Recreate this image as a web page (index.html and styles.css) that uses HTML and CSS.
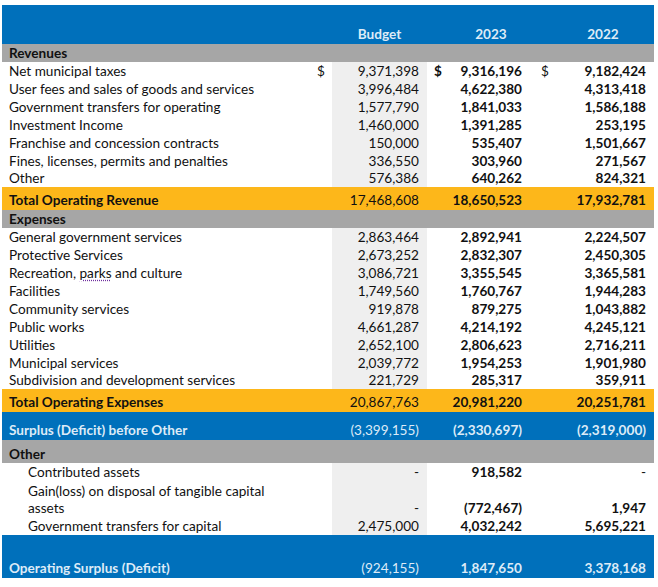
FILE: index.html
```html
<!DOCTYPE html>
<html>
<head>
<meta charset="utf-8">
<link rel="stylesheet" href="styles.css">
</head>
<body>
<table class="fin">
  <colgroup>
    <col class="c-label"><col class="c-dol1"><col class="c-bud"><col class="c-dol2"><col class="c-y23"><col class="c-dol3"><col class="c-y22">
  </colgroup>
  <tr class="head">
    <td></td><td></td><td class="hc">Budget</td><td></td><td class="hc">2023</td><td></td><td class="hc">2022</td>
  </tr>
  <tr class="sec"><td>Revenues</td><td></td><td></td><td></td><td></td><td></td><td></td></tr>
  <tr class="row"><td class="lbl">Net municipal taxes</td><td class="dol">$</td><td class="num bud">9,371,398</td><td class="dol b">$</td><td class="num b">9,316,196</td><td class="dol d3">$</td><td class="num b">9,182,424</td></tr>
  <tr class="row"><td class="lbl">User fees and sales of goods and services</td><td></td><td class="num bud">3,996,484</td><td></td><td class="num b">4,622,380</td><td></td><td class="num b">4,313,418</td></tr>
  <tr class="row"><td class="lbl">Government transfers for operating</td><td></td><td class="num bud">1,577,790</td><td></td><td class="num b">1,841,033</td><td></td><td class="num b">1,586,188</td></tr>
  <tr class="row"><td class="lbl">Investment Income</td><td></td><td class="num bud">1,460,000</td><td></td><td class="num b">1,391,285</td><td></td><td class="num b">253,195</td></tr>
  <tr class="row"><td class="lbl">Franchise and concession contracts</td><td></td><td class="num bud">150,000</td><td></td><td class="num b">535,407</td><td></td><td class="num b">1,501,667</td></tr>
  <tr class="row"><td class="lbl">Fines, licenses, permits and penalties</td><td></td><td class="num bud">336,550</td><td></td><td class="num b">303,960</td><td></td><td class="num b">271,567</td></tr>
  <tr class="row r17"><td class="lbl">Other</td><td></td><td class="num bud">576,386</td><td></td><td class="num b">640,262</td><td></td><td class="num b">824,321</td></tr>
  <tr class="tot"><td class="lbl">Total Operating Revenue</td><td></td><td class="num">17,468,608</td><td></td><td class="num b">18,650,523</td><td></td><td class="num b">17,932,781</td></tr>
  <tr class="sec"><td>Expenses</td><td></td><td></td><td></td><td></td><td></td><td></td></tr>
  <tr class="row"><td class="lbl">General government services</td><td></td><td class="num bud">2,863,464</td><td></td><td class="num b">2,892,941</td><td></td><td class="num b">2,224,507</td></tr>
  <tr class="row"><td class="lbl">Protective Services</td><td></td><td class="num bud">2,673,252</td><td></td><td class="num b">2,832,307</td><td></td><td class="num b">2,450,305</td></tr>
  <tr class="row"><td class="lbl">Recreation, <span class="spell">parks</span> and culture</td><td></td><td class="num bud">3,086,721</td><td></td><td class="num b">3,355,545</td><td></td><td class="num b">3,365,581</td></tr>
  <tr class="row"><td class="lbl">Facilities</td><td></td><td class="num bud">1,749,560</td><td></td><td class="num b">1,760,767</td><td></td><td class="num b">1,944,283</td></tr>
  <tr class="row"><td class="lbl">Community services</td><td></td><td class="num bud">919,878</td><td></td><td class="num b">879,275</td><td></td><td class="num b">1,043,882</td></tr>
  <tr class="row"><td class="lbl">Public works</td><td></td><td class="num bud">4,661,287</td><td></td><td class="num b">4,214,192</td><td></td><td class="num b">4,245,121</td></tr>
  <tr class="row"><td class="lbl">Utilities</td><td></td><td class="num bud">2,652,100</td><td></td><td class="num b">2,806,623</td><td></td><td class="num b">2,716,211</td></tr>
  <tr class="row"><td class="lbl">Municipal services</td><td></td><td class="num bud">2,039,772</td><td></td><td class="num b">1,954,253</td><td></td><td class="num b">1,901,980</td></tr>
  <tr class="row r17"><td class="lbl">Subdivision and development services</td><td></td><td class="num bud">221,729</td><td></td><td class="num b">285,317</td><td></td><td class="num b">359,911</td></tr>
  <tr class="tot"><td class="lbl">Total Operating Expenses</td><td></td><td class="num">20,867,763</td><td></td><td class="num b">20,981,220</td><td></td><td class="num b">20,251,781</td></tr>
  <tr class="blue b28"><td class="lbl b">Surplus (Deficit) before Other</td><td></td><td class="num">(3,399,155)</td><td></td><td class="num b">(2,330,697)</td><td></td><td class="num b">(2,319,000)</td></tr>
  <tr class="sec s23"><td>Other</td><td></td><td></td><td></td><td></td><td></td><td></td></tr>
  <tr class="row"><td class="lbl ind">Contributed assets</td><td></td><td class="num bud">-</td><td></td><td class="num b">918,582</td><td></td><td class="num">-</td></tr>
  <tr class="row r36"><td class="lbl ind">Gain(loss) on disposal of tangible capital<br>assets</td><td></td><td class="num bud">-</td><td></td><td class="num b">(772,467)</td><td></td><td class="num b">1,947</td></tr>
  <tr class="row"><td class="lbl ind">Government transfers for capital</td><td></td><td class="num bud">2,475,000</td><td></td><td class="num b">4,032,242</td><td></td><td class="num b">5,695,221</td></tr>
  <tr class="blue b43"><td class="lbl b">Operating Surplus (Deficit)</td><td></td><td class="num">(924,155)</td><td></td><td class="num b">1,847,650</td><td></td><td class="num b">3,378,168</td></tr>
</table>
</body>
</html>
```

FILE: styles.css
```css
html, body {
  margin: 0;
  padding: 0;
  background: #ffffff;
}
body {
  font-family: Lato, "Open Sans", sans-serif;
  font-size: 13.6px;
  color: #111111;
}
.fin {
  margin: 5px 0 0 2px;
  width: 652px;
  table-layout: fixed;
  border-collapse: collapse;
  border-spacing: 0;
}
.c-label { width: 308px; }
.c-dol1 { width: 22px; }
.c-bud { width: 95px; }
.c-dol2 { width: 25px; }
.c-y23 { width: 78px; }
.c-dol3 { width: 22px; }
.c-y22 { width: 102px; }

.fin td {
  box-sizing: border-box;
  padding: 0;
  white-space: nowrap;
  vertical-align: bottom;
  line-height: 17px;
  overflow: hidden;
}
.head td {
  background: #0070bb;
  height: 39px;
  color: #ddebf7;
  font-weight: 700;
  padding-bottom: 1px;
}
.hc { text-align: center; }

.sec td {
  background: #a6a6a6;
  height: 18px;
  font-weight: 700;
}
.sec td:first-child { padding-left: 7px; }
.sec.s23 td { height: 23px; }

.row td { height: 18px; }
.row.r17 td { height: 17px; }
.row.r36 td { height: 36px; }
.lbl { padding-left: 7px !important; }
.ind { padding-left: 26px !important; }

.num { text-align: right; padding-right: 8px !important; }
.bud { background: #efefef; }
.dol { padding-left: 7px !important; }
.dol.d3 { padding-left: 11px !important; }
.b { font-weight: 700; }

.tot td {
  background: #fdb71a;
  height: 23px;
  font-weight: 700;
  padding-bottom: 1px;
}
.tot td.num:not(.b) { font-weight: 400; }

.blue td {
  background: #0070bb;
  color: #ddebf7;
  padding-bottom: 1px;
}
.blue.b28 td { height: 28px; }
.blue.b43 td { height: 43px; }

.spell {
  text-decoration: underline dotted #7030a0;
  text-underline-offset: 2px;
}
```
